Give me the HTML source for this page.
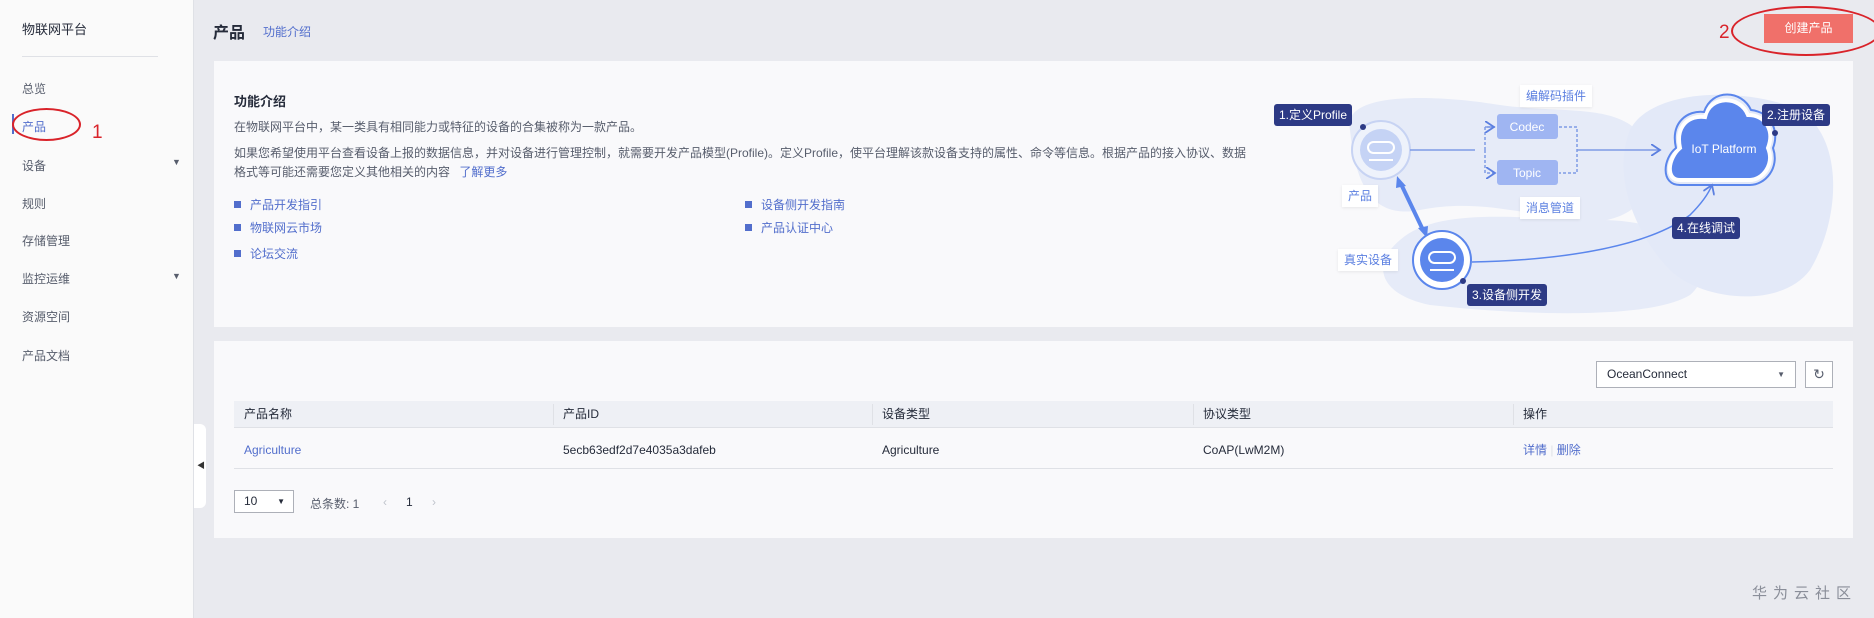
<!DOCTYPE html>
<html><head><meta charset="utf-8"><style>
*{margin:0;padding:0;box-sizing:border-box}
body{width:1874px;height:618px;position:relative;background:#e9eaef;font-family:"Liberation Sans","Noto Sans CJK SC",sans-serif;color:#575d6c;font-size:12px;overflow:hidden}
.a{position:absolute;white-space:nowrap}
.side{position:absolute;left:0;top:0;width:194px;height:618px;background:#fafafa;border-right:1px solid #dfe1e6}
.mi{position:absolute;left:22px;font-size:12px;color:#575d6c}
.card{position:absolute;left:214px;width:1639px;background:#f9f9fb}
.lk{color:#526ecc}
.sq{display:inline-block;width:7px;height:7px;background:#526ecc;margin-right:9px;vertical-align:1px}
.th{position:absolute;top:401px;height:27px;line-height:27px;color:#252b3a;font-size:12px}
.td{position:absolute;top:440px;line-height:20px;font-size:12px;color:#252b3a}
.lb{position:absolute;background:#2d3a85;color:#fff;font-size:12px;line-height:22px;border-radius:3px;padding:0 5px}
.wl{position:absolute;background:#fff;color:#5b7fe0;font-size:12px;line-height:22px;padding:0 6px;box-shadow:0 1px 3px rgba(0,0,0,.08)}
</style></head><body>
<div class="side">
<div class="a" style="left:22px;top:19px;font-size:13px;color:#252b3a">物联网平台</div>
<div class="a" style="left:22px;top:56px;width:136px;height:1px;background:#dfe1e6"></div>
<div class="mi a" style="top:80px">总览</div>
<div class="mi a" style="top:118px;color:#526ecc">产品</div>
<div class="a" style="left:12px;top:114px;width:2px;height:20px;background:#526ecc"></div>
<div class="mi a" style="top:157px">设备</div><div class="a" style="left:172px;top:157px;font-size:9px">▼</div>
<div class="mi a" style="top:195px">规则</div>
<div class="mi a" style="top:232px">存储管理</div>
<div class="mi a" style="top:270px">监控运维</div><div class="a" style="left:172px;top:271px;font-size:9px">▼</div>
<div class="mi a" style="top:308px">资源空间</div>
<div class="mi a" style="top:347px">产品文档</div>
</div>
<div class="a" style="left:194px;top:424px;width:12px;height:84px;background:#fff;border-radius:0 6px 6px 0"></div>
<div class="a" style="left:197px;top:460px;font-size:8px;color:#333">◀</div>
<div class="a" style="left:12px;top:108px;width:69px;height:33px;border:2px solid #d9232a;border-radius:50%"></div>
<div class="a" style="left:92px;top:122px;font-size:19px;color:#d9232a">1</div>

<div class="a" style="left:213px;top:19px;font-size:16px;font-weight:bold;color:#252b3a">产品</div>
<div class="a lk" style="left:263px;top:23px;font-size:12px">功能介绍</div>
<div class="a" style="left:1764px;top:14px;width:89px;height:29px;background:#f0706a;color:#fff;text-align:center;line-height:29px;font-size:12px">创建产品</div>
<div class="a" style="left:1731px;top:6px;width:150px;height:50px;border:2px solid #d9232a;border-radius:50%"></div>
<div class="a" style="left:1719px;top:22px;font-size:19px;color:#d9232a">2</div>

<div class="card" style="top:61px;height:266px">
<div class="a" style="left:20px;top:30px;font-size:13px;font-weight:bold;color:#252b3a">功能介绍</div>
<div class="a" style="left:20px;top:57px">在物联网平台中，某一类具有相同能力或特征的设备的合集被称为一款产品。</div>
<div class="a" style="left:20px;top:83px">如果您希望使用平台查看设备上报的数据信息，并对设备进行管理控制，就需要开发产品模型(Profile)。定义Profile，使平台理解该款设备支持的属性、命令等信息。根据产品的接入协议、数据</div>
<div class="a" style="left:20px;top:102px">格式等可能还需要您定义其他相关的内容 <span class="lk" style="margin-left:6px">了解更多</span></div>
<div class="a lk" style="left:20px;top:135px"><span class="sq"></span>产品开发指引</div>
<div class="a lk" style="left:20px;top:158px"><span class="sq"></span>物联网云市场</div>
<div class="a lk" style="left:20px;top:184px"><span class="sq"></span>论坛交流</div>
<div class="a lk" style="left:531px;top:135px"><span class="sq"></span>设备侧开发指南</div>
<div class="a lk" style="left:531px;top:158px"><span class="sq"></span>产品认证中心</div>
</div>

<svg class="a" style="left:1270px;top:70px" width="580" height="250" viewBox="0 0 580 250">
<defs><marker id="ar" markerWidth="8" markerHeight="8" refX="6" refY="4" orient="auto"><path d="M0 0L6 4L0 8" fill="none" stroke="#5b7fe0" stroke-width="1.2"/></marker></defs>
<path d="M80 60C70 20 170 25 230 35C300 45 360 30 380 80C395 130 350 160 300 150C240 140 200 130 150 140C100 150 85 110 80 60Z" fill="#e6ebf8"/>
<path d="M130 170C170 135 260 150 330 150C420 150 450 200 420 225C380 250 250 245 160 235C110 225 100 195 130 170Z" fill="#e6ebf8"/>
<path d="M360 60C380 20 470 15 530 40C575 70 570 150 540 200C510 240 430 230 400 200C370 170 340 110 360 60Z" fill="#e3e9f8"/>
<circle cx="111" cy="80" r="29" fill="#eef2fb" stroke="#c7d3f3" stroke-width="2"/>
<circle cx="111" cy="80" r="21" fill="#c5d3f5"/>
<rect x="98" y="72" width="26" height="11" rx="5.5" fill="none" stroke="#fff" stroke-width="2"/><line x1="99" y1="90" x2="123" y2="90" stroke="#fff" stroke-width="2"/>
<circle cx="93" cy="57" r="3" fill="#2d3a85"/>
<line x1="140" y1="80" x2="205" y2="80" stroke="#7f9be6" stroke-width="1.5"/>
<path d="M215 80V57H225M215 80V103H225" fill="none" stroke="#7f9be6" stroke-width="1.5" stroke-dasharray="3 2" marker-end="url(#ar)"/>
<path d="M215 57H224" stroke="#7f9be6" stroke-width="1.5" marker-end="url(#ar)"/>
<path d="M289 57H307V103H289" fill="none" stroke="#7f9be6" stroke-width="1.5" stroke-dasharray="3 2"/>
<line x1="307" y1="80" x2="390" y2="80" stroke="#7f9be6" stroke-width="1.5" marker-end="url(#ar)"/>
<rect x="227" y="44" width="61" height="25" rx="3" fill="#9fb5f2"/><text x="257" y="61" fill="#fff" font-size="12" text-anchor="middle" font-family="Liberation Sans">Codec</text>
<rect x="227" y="90" width="61" height="25" rx="3" fill="#9fb5f2"/><text x="257" y="107" fill="#fff" font-size="12" text-anchor="middle" font-family="Liberation Sans">Topic</text>
<path d="M410 78C405 55 420 45 435 47C440 25 470 25 478 45C495 45 505 60 498 78C505 95 492 110 480 110H410C395 110 398 88 410 78Z" fill="#5b86ec" stroke="#fff" stroke-width="4"/>
<path d="M406 78C400 52 418 40 434 42C442 18 472 20 481 40C500 42 510 60 503 78C510 98 495 115 480 115H410C390 115 393 88 406 78Z" fill="none" stroke="#5b86ec" stroke-width="2"/>
<text x="454" y="83" fill="#fff" font-size="12" text-anchor="middle" font-family="Liberation Sans">IoT Platform</text>
<circle cx="505" cy="63" r="3" fill="#2d3a85"/>
<path d="M202 192C300 190 380 175 420 145C430 135 438 125 442 115" fill="none" stroke="#5b86ec" stroke-width="1.5" marker-end="url(#ar)"/>
<line x1="131" y1="114" x2="153" y2="160" stroke="#5b86ec" stroke-width="4"/>
<path d="M127 106L136 116L126 118Z" fill="#5b86ec"/><path d="M157 168L148 158L158 156Z" fill="#5b86ec"/>
<circle cx="172" cy="190" r="29" fill="#fff" stroke="#5b86ec" stroke-width="2"/>
<circle cx="172" cy="190" r="22" fill="#5b86ec"/>
<rect x="159" y="182" width="26" height="11" rx="5.5" fill="none" stroke="#fff" stroke-width="2"/><line x1="160" y1="200" x2="184" y2="200" stroke="#fff" stroke-width="2"/>
<circle cx="193" cy="211" r="3" fill="#2d3a85"/>
</svg>
<div class="lb" style="left:1274px;top:104px">1.定义Profile</div>
<div class="lb" style="left:1762px;top:104px">2.注册设备</div>
<div class="lb" style="left:1467px;top:284px">3.设备侧开发</div>
<div class="lb" style="left:1672px;top:217px">4.在线调试</div>
<div class="wl" style="left:1520px;top:85px">编解码插件</div>
<div class="wl" style="left:1520px;top:197px">消息管道</div>
<div class="wl" style="left:1342px;top:185px">产品</div>
<div class="wl" style="left:1338px;top:249px">真实设备</div>

<div class="card" style="top:341px;height:197px"></div>
<div class="a" style="left:1596px;top:361px;width:200px;height:27px;border:1px solid #adb0b8;background:#fff;line-height:25px;padding-left:10px;color:#252b3a">OceanConnect<span style="position:absolute;right:10px;font-size:8px;color:#575d6c">▼</span></div>
<div class="a" style="left:1805px;top:361px;width:28px;height:27px;border:1px solid #adb0b8;background:#fff;text-align:center;line-height:25px;font-size:14px;color:#575d6c">↻</div>
<div class="a" style="left:234px;top:401px;width:1599px;height:27px;background:#eef0f5;border-bottom:1px solid #dfe1e6"></div>
<div class="th" style="left:244px">产品名称</div>
<div class="th" style="left:563px">产品ID</div>
<div class="th" style="left:882px">设备类型</div>
<div class="th" style="left:1203px">协议类型</div>
<div class="th" style="left:1523px">操作</div>
<div class="a" style="left:553px;top:404px;width:1px;height:21px;background:#dfe1e6"></div>
<div class="a" style="left:872px;top:404px;width:1px;height:21px;background:#dfe1e6"></div>
<div class="a" style="left:1193px;top:404px;width:1px;height:21px;background:#dfe1e6"></div>
<div class="a" style="left:1513px;top:404px;width:1px;height:21px;background:#dfe1e6"></div>
<div class="td lk" style="left:244px;color:#526ecc">Agriculture</div>
<div class="td" style="left:563px">5ecb63edf2d7e4035a3dafeb</div>
<div class="td" style="left:882px">Agriculture</div>
<div class="td" style="left:1203px">CoAP(LwM2M)</div>
<div class="td" style="left:1523px;color:#526ecc">详情 <span style="color:#dfe1e6">|</span> 删除</div>
<div class="a" style="left:234px;top:468px;width:1599px;height:1px;background:#dfe1e6"></div>
<div class="a" style="left:234px;top:490px;width:60px;height:23px;border:1px solid #adb0b8;background:#fff;line-height:21px;padding-left:9px;color:#252b3a">10<span style="position:absolute;right:8px;font-size:8px">▼</span></div>
<div class="a" style="left:310px;top:495px">总条数: 1</div>
<div class="a" style="left:383px;top:495px;color:#c0c4cc">‹</div>
<div class="a" style="left:406px;top:495px;color:#252b3a">1</div>
<div class="a" style="left:432px;top:495px;color:#c0c4cc">›</div>
<div class="a" style="left:1752px;top:582px;font-size:15px;color:#8a8e99;letter-spacing:6px">华为云社区</div>
</body></html>
